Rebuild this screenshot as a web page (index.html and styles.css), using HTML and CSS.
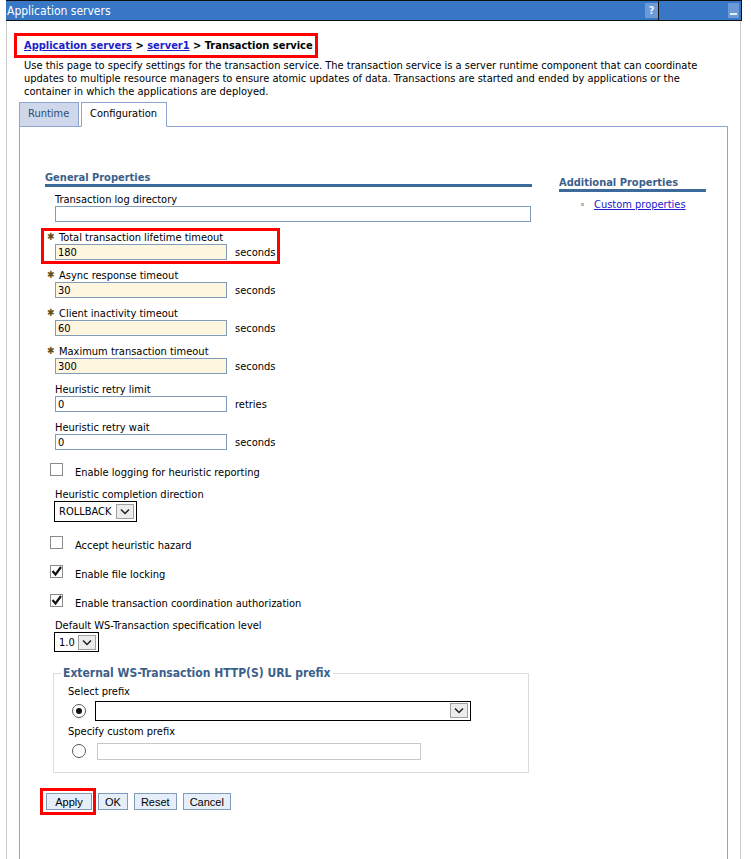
FILE: index.html
```html
<!DOCTYPE html>
<html lang="en">
<head>
  <meta charset="UTF-8" />
  <title>Application servers - Transaction service</title>
  <link rel="stylesheet" href="styles.css">
</head>
<body>

  <div class="portlet">
    <div class="titlebar">
      <span class="title">Application servers</span>
      <span class="tb-help">?</span>
      <span class="tb-sep"></span>
      <span class="tb-min"><span class="tb-min-bar"></span></span>
    </div>

    <div class="portlet-body">
      <div class="crumbs">
        <a href="#">Application servers</a> &gt; <a href="#">server1</a> &gt; Transaction service
      </div>

      <p class="intro">Use this page to specify settings for the transaction service. The transaction service is a server runtime component that can coordinate updates to multiple resource managers to ensure atomic updates of data. Transactions are started and ended by applications or the container in which the applications are deployed.</p>

      <div class="tabs">
        <a class="tab" href="#">Runtime</a>
        <span class="tab active">Configuration</span>
      </div>

      <div class="tab-panel">
        <div class="cols">
          <div class="general">
            <div class="section-title">General Properties</div>

            <div class="fields">
              <div class="field">
                <label>Transaction log directory</label>
                <div class="row"><input class="text wide" type="text" value=""></div>
              </div>

              <div class="field marked">
                <label class="req"><span class="star">&#10033;</span>Total transaction lifetime timeout</label>
                <div class="row"><input class="text short required" type="text" value="180"><span class="unit">seconds</span></div>
              </div>

              <div class="field">
                <label class="req"><span class="star">&#10033;</span>Async response timeout</label>
                <div class="row"><input class="text short required" type="text" value="30"><span class="unit">seconds</span></div>
              </div>

              <div class="field">
                <label class="req"><span class="star">&#10033;</span>Client inactivity timeout</label>
                <div class="row"><input class="text short required" type="text" value="60"><span class="unit">seconds</span></div>
              </div>

              <div class="field">
                <label class="req"><span class="star">&#10033;</span>Maximum transaction timeout</label>
                <div class="row"><input class="text short required" type="text" value="300"><span class="unit">seconds</span></div>
              </div>

              <div class="field">
                <label>Heuristic retry limit</label>
                <div class="row"><input class="text short" type="text" value="0"><span class="unit">retries</span></div>
              </div>

              <div class="field">
                <label>Heuristic retry wait</label>
                <div class="row"><input class="text short" type="text" value="0"><span class="unit">seconds</span></div>
              </div>

              <div class="check first">
                <span class="box"></span>
                <span class="check-label">Enable logging for heuristic reporting</span>
              </div>

              <div class="field pick">
                <label>Heuristic completion direction</label>
                <div class="select">
                  <span class="select-value">ROLLBACK</span>
                  <span class="select-btn"><svg width="10" height="7" viewBox="0 0 10 7"><path d="M1 1.5 L5 5.5 L9 1.5" fill="none" stroke="#222" stroke-width="1.5"/></svg></span>
                </div>
              </div>

              <div class="check">
                <span class="box"></span>
                <span class="check-label">Accept heuristic hazard</span>
              </div>

              <div class="check">
                <span class="box"><svg width="13" height="13" viewBox="0 0 13 13"><path d="M2.5 6 L5.5 9.5 L11 2" fill="none" stroke="#111" stroke-width="2.2"/></svg></span>
                <span class="check-label">Enable file locking</span>
              </div>

              <div class="check">
                <span class="box"><svg width="13" height="13" viewBox="0 0 13 13"><path d="M2.5 6 L5.5 9.5 L11 2" fill="none" stroke="#111" stroke-width="2.2"/></svg></span>
                <span class="check-label">Enable transaction coordination authorization</span>
              </div>

              <div class="field pick">
                <label>Default WS-Transaction specification level</label>
                <div class="select small">
                  <span class="select-value">1.0</span>
                  <span class="select-btn"><svg width="10" height="7" viewBox="0 0 10 7"><path d="M1 1.5 L5 5.5 L9 1.5" fill="none" stroke="#222" stroke-width="1.5"/></svg></span>
                </div>
              </div>

              <fieldset class="prefix">
                <legend>External WS-Transaction HTTP(S) URL prefix</legend>
                <label>Select prefix</label>
                <div class="radio-row">
                  <span class="radio on"></span>
                  <div class="select long">
                    <span class="select-value"></span>
                    <span class="select-btn"><svg width="10" height="7" viewBox="0 0 10 7"><path d="M1 1.5 L5 5.5 L9 1.5" fill="none" stroke="#222" stroke-width="1.5"/></svg></span>
                  </div>
                </div>
                <label>Specify custom prefix</label>
                <div class="radio-row custom-row">
                  <span class="radio"></span>
                  <input class="text custom" type="text" value="" disabled>
                </div>
              </fieldset>
            </div>
          </div>

          <div class="additional">
            <div class="section-title">Additional Properties</div>
            <ul class="links">
              <li><a href="#">Custom properties</a></li>
            </ul>
          </div>
        </div>

        <div class="buttons">
          <span class="marked-btn"><button class="btn apply">Apply</button></span>
          <button class="btn">OK</button>
          <button class="btn">Reset</button>
          <button class="btn">Cancel</button>
        </div>
      </div>
    </div>
  </div>

</body>
</html>
```

FILE: styles.css
```css
body {
  margin: 0;
  font-family: "DejaVu Sans Condensed", "DejaVu Sans", sans-serif;
  font-size: 11px;
  color: #000;
  background: #fff;
}

a {
  color: #2020cc;
}

/* portlet frame */

.portlet {
  margin-left: 6px;
  width: 735px;
  min-height: 859px;
  box-sizing: border-box;
  border-left: 1px solid #ccc;
  border-right: 1px solid #ccc;
}

.titlebar {
  display: flex;
  align-items: center;
  height: 19px;
  margin: 0 -2px 0 -1px;
  background: #3777c6;
  border-top: 1px solid #111;
  border-bottom: 1px solid #111;
  border-right: 1px solid #111;
  color: #fff;
  font-size: 12px;
}

.title {
  flex: 1;
  padding-left: 1px;
}

.tb-help {
  width: 13px;
  height: 15px;
  line-height: 15px;
  text-align: center;
  background: #6b9ad6;
  color: #e8f0fb;
  font-weight: bold;
  font-size: 11px;
}

.tb-sep {
  align-self: stretch;
  width: 1px;
  background: #111;
  margin-right: 69px;
}

.tb-min {
  display: flex;
  align-items: flex-end;
  justify-content: center;
  width: 11px;
  height: 15px;
  margin-right: 2px;
  background: #6b9ad6;
}

.tb-min-bar {
  width: 7px;
  height: 2px;
  margin-bottom: 3px;
  background: #e8f0fb;
}

.portlet-body {
  padding: 0 12px;
}

/* breadcrumb and intro */

.crumbs {
  display: inline-block;
  margin: 12px 0 0 -5px;
  padding: 3px 2px 3px 7px;
  border: 3px solid #f00;
  font-weight: bold;
  line-height: 13px;
}

.intro {
  margin: 1px 0 0;
  padding-left: 5px;
  line-height: 13px;
}

/* tabs */

.tabs {
  display: flex;
  gap: 2px;
  margin-top: 4px;
  margin-bottom: -1px;
}

.tab {
  position: relative;
  height: 23px;
  line-height: 22px;
  padding: 0 8px;
  border: 1px solid #8ea4d1;
  text-decoration: none;
}

.tab:first-child {
  width: 42px;
  background: #cfd8ea;
  color: #2c4a78;
}

.tab.active {
  width: 68px;
  color: #000;
  background: #fff;
  border-bottom-color: #fff;
}

.tab-panel {
  width: 709px;
  min-height: 740px;
  box-sizing: border-box;
  padding-top: 44px;
  border: 1px solid #8ea4d1;
  border-bottom: none;
}

.cols {
  display: flex;
}

.general {
  width: 487px;
  margin-left: 25px;
}

.additional {
  width: 147px;
  margin-left: 27px;
  margin-top: 5px;
}

.section-title {
  font-weight: bold;
  color: #3b5f8a;
  line-height: 13px;
  border-bottom: 3px solid #3c6a9b;
}

.links {
  margin: 6px 0 0;
  padding: 0 0 0 35px;
  list-style: none;
}

.links li {
  position: relative;
  line-height: 13px;
}

.links li::before {
  content: "";
  position: absolute;
  left: -13px;
  top: 5px;
  width: 3px;
  height: 3px;
  background: #cbb99f;
}

/* form fields */

.fields {
  padding-left: 10px;
  padding-top: 6px;
}

.field {
  margin-top: 9px;
}

.field:first-child {
  margin-top: 0;
}

.field label,
.prefix label {
  display: block;
  height: 13px;
  line-height: 13px;
}

.field label.req {
  margin-left: -8px;
}

.star {
  display: inline-block;
  width: 12px;
  height: 13px;
  line-height: 12px;
  vertical-align: top;
  color: #5f5420;
  font-size: 10px;
}

.field.marked {
  width: 239px;
  box-sizing: border-box;
  margin-left: -14px;
  margin-top: 6px;
  padding: 0 0 1px 11px;
  border: 3px solid #f00;
}

.field.marked + .field {
  margin-top: 5px;
}

.row {
  display: flex;
  align-items: center;
}

.text {
  height: 16px;
  box-sizing: border-box;
  margin: 0;
  padding: 0 2px;
  border: 1px solid #7f9db9;
  font-family: inherit;
  font-size: 11px;
  color: #000;
  background: #fff;
}

.text.wide {
  width: 476px;
}

.text.short {
  width: 172px;
}

.text.required {
  background: #fef6df;
}

.unit {
  margin-left: 8px;
}

/* checkboxes */

.check {
  display: flex;
  margin: 13px 0 0 -5px;
}

.box {
  width: 13px;
  height: 13px;
  box-sizing: border-box;
  border: 1px solid #8a8a8a;
  background: #fff;
}

.box svg {
  display: block;
  margin: -1px;
}

.check-label {
  margin: 3px 0 0 12px;
  line-height: 13px;
}

.field.pick {
  margin-top: 9px;
}

.field.pick + .check {
  margin-top: 14px;
}

/* drop-down boxes */

.select {
  display: inline-flex;
  align-items: center;
  justify-content: space-between;
  width: 83px;
  height: 21px;
  box-sizing: border-box;
  margin-left: -1px;
  padding: 0 2px 0 4px;
  border: 1px solid #000;
}

.select.small {
  width: 45px;
  height: 20px;
}

.select.long {
  width: 376px;
  height: 20px;
  margin-left: 9px;
}

.select-btn {
  display: flex;
  align-items: center;
  justify-content: center;
  width: 18px;
  height: 15px;
  box-sizing: border-box;
  border: 1px solid #a0a0a0;
  background: #ececec;
}

/* url prefix group */

.prefix {
  width: 476px;
  box-sizing: border-box;
  margin: 14px 0 0 -2px;
  padding: 0 14px 12px;
  border: 1px solid #dcdcdc;
}

.prefix legend {
  margin-left: -7px;
  padding: 0 2px;
  font-size: 12px;
  font-weight: bold;
  color: #3b5f8a;
  line-height: 15px;
}

.prefix label {
  margin-top: 4px;
}

.radio-row {
  display: flex;
  align-items: center;
  height: 21px;
  margin-top: 2px;
}

.radio-row.custom-row {
  height: 18px;
  margin-top: 4px;
}

.radio {
  width: 14px;
  height: 14px;
  box-sizing: border-box;
  margin-left: 4px;
  border: 1px solid #5a5a5a;
  border-radius: 50%;
  background: #fff;
  display: flex;
  align-items: center;
  justify-content: center;
}

.radio.on::after {
  content: "";
  width: 6px;
  height: 6px;
  border-radius: 50%;
  background: #111;
}

.text.custom {
  width: 324px;
  height: 17px;
  margin-left: 11px;
  border-color: #c8c8c8;
}

/* buttons */

.buttons {
  display: flex;
  align-items: center;
  gap: 6px;
  margin: 15px 0 0 20px;
}

.marked-btn {
  display: inline-flex;
  padding: 2px 1px 2px 3px;
  border: 3px solid #f00;
  margin-right: -4px;
}

.btn {
  height: 17px;
  padding: 0 6px;
  border: 1px solid #7f9db9;
  background: #e5eef9;
  font-family: "Liberation Sans", Arial, sans-serif;
  font-size: 11px;
  color: #000;
}

.btn.apply {
  min-width: 46px;
}
```
